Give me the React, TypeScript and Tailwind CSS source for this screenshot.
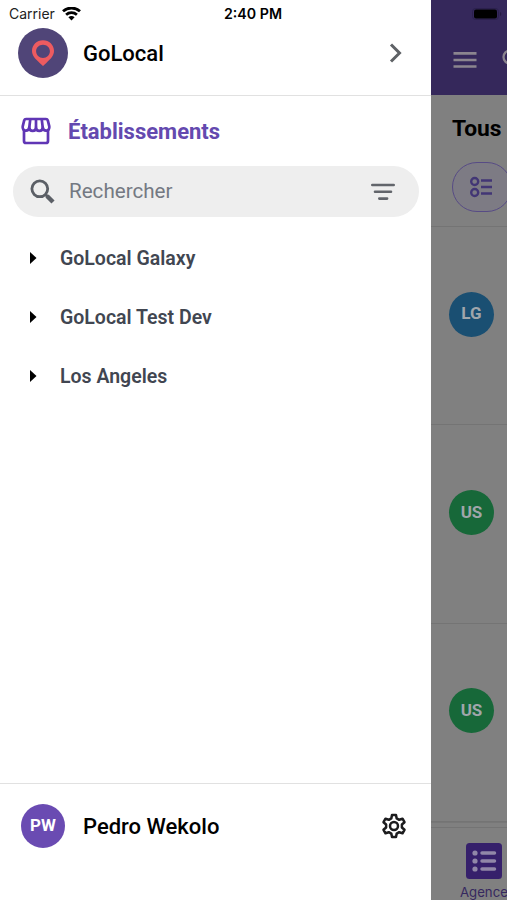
import type { ReactNode } from "react";

const places = ["GoLocal Galaxy", "GoLocal Test Dev", "Los Angeles"];

const agencies = [
  { initials: "LG", color: "bg-[#1a4f72]" },
  { initials: "US", color: "bg-[#176839]" },
  { initials: "US", color: "bg-[#176839]" },
];

function StatusBar() {
  return (
    <div className="flex h-7 shrink-0 items-center pl-[9px] font-['Inter',sans-serif] text-black">
      <div className="flex w-[215px] items-center gap-[6px]">
        <span className="w-[47px] text-[14px] leading-7 text-[#222]">Carrier</span>
        <svg width="19" height="14" viewBox="0 0 19 14" fill="none" stroke="currentColor">
          <path d="M1 4.3C5.8-.1 13.2-.1 18 4.300" strokeWidth="2.800" />
          <path d="M4.100 7.700c3-2.800 7.800-2.800 10.800 0" strokeWidth="2.700" />
          <path d="M9.500 13.400 6.400 10.200c1.700-1.600 4.500-1.600 6.200 0z" fill="currentColor" stroke="none" />
        </svg>
      </div>
      <span className="whitespace-nowrap text-[14.2px] font-semibold leading-7">2:40 PM</span>
    </div>
  );
}

function Avatar({ className, children }: { className: string; children: ReactNode }) {
  return (
    <div
      className={`flex shrink-0 items-center justify-center rounded-full text-[17px] font-bold ${className}`}
    >
      {children}
    </div>
  );
}

function SearchField() {
  return (
    <div className="ml-[13px] mr-3 flex h-[51px] items-center rounded-full bg-[#eeeeee] pl-[17px] pr-6">
      <svg width="25" height="25" viewBox="0 0 25 25" fill="none" stroke="#5b5f66">
        <circle cx="9.800" cy="9.800" r="7.900" strokeWidth="2.800" />
        <path d="m15.500 15.500 2.500 2.500" strokeWidth="3" />
        <path d="m17 17 6 6" strokeWidth="4.400" />
      </svg>
      <span className="mb-[2px] ml-[14px] flex-1 text-[20.600px] leading-6 text-[#747982]">Rechercher</span>
      <svg width="24" height="18" viewBox="0 0 24 18" stroke="#62656b" strokeWidth="2.600" strokeLinecap="round">
        <path d="M1.300 2h21.400M4 8.800h16M8.300 15.600h7.800" />
      </svg>
    </div>
  );
}

function Drawer() {
  return (
    <aside className="flex w-[431px] shrink-0 flex-col bg-white">
      <header className="flex h-24 shrink-0 flex-col border-b border-[#e1e1e1]">
        <StatusBar />
        <div className="flex h-[50px] items-center pl-[18px] pr-[29px]">
          <Avatar className="size-[50px] bg-[#504578]">
            <svg width="24" height="28" viewBox="0 0 24 28">
              <path
                d="M12 1.300C5.800 1.300 1 6 1 11.800c0 4.800 2.900 7.700 7.700 12.200l3.300 3 3.300-3c4.800-4.500 7.700-7.400 7.700-12.200C23 6 18.200 1.300 12 1.300Zm0 4.500c3.900 0 6.900 2.900 6.900 6.500S15.900 19 12 19s-6.900-3.100-6.900-6.700 3-6.500 6.900-6.500Z"
                fill="#ed5b60"
                fillRule="evenodd"
              />
            </svg>
          </Avatar>
          <span className="ml-[15px] flex-1 text-[22px] font-medium text-black">GoLocal</span>
          <svg width="13" height="20" viewBox="0 0 13 20" fill="none" stroke="#5f6266" strokeWidth="3">
            <path d="m2 1.500 8.500 8.500L2 18.500" />
          </svg>
        </div>
      </header>

      <div className="flex h-[70px] shrink-0 items-center pl-[21px] text-[#6449af]">
        <svg
          width="30"
          height="28"
          viewBox="0 0 30 28"
          fill="none"
          stroke="#6036b5"
          strokeWidth="2.700"
          strokeLinejoin="round"
        >
          <path d="M3 13v11a2 2 0 0 0 2 2h20a2 2 0 0 0 2-2V13" />
          <path d="M5 2h20c1 0 1.500.4 1.800 1.400l1.500 5.900c.8 5.300-5.700 6-6.600 1-.3 4.800-6.400 4.800-6.700 0-.3 4.800-6.400 4.800-6.700 0-.9 5-7.400 4.300-6.600-1l1.500-5.900C3.500 2.400 4 2 5 2Z" />
          <path d="m9.300 2-1 8.300M15 2v8.300M20.700 2l1 8.300" />
        </svg>
        <h1 className="ml-[17px] text-[22px] font-bold">Établissements</h1>
      </div>
      <SearchField />

      <ul className="mt-[12px]">
        {places.map((place) => (
          <li key={place} className="flex h-[58.700px] items-center pl-[30px] text-[#414651]">
            <svg width="7" height="12" viewBox="0 0 7 12">
              <path d="m0 0 6.500 6L0 12Z" fill="#000" />
            </svg>
            <span className="ml-[23px] pt-px text-[19.500px] font-semibold">{place}</span>
          </li>
        ))}
      </ul>

      <footer className="mt-auto flex h-[117px] items-start border-t border-[#e1e1e1] pl-[21px] pr-6 pt-5">
        <Avatar className="size-11 bg-[#6a4bb2] text-white">PW</Avatar>
        <span className="ml-[18px] flex-1 text-[22px] font-medium leading-[45px] text-black">Pedro Wekolo</span>
        <svg
          className="mt-[9px]"
          width="26"
          height="26"
          viewBox="0 0 26 26"
          fill="none"
          stroke="#1c1c1e"
          strokeWidth="2.500"
          strokeLinejoin="round"
        >
          <path d="M11 2h4l.7 3.400 2.500 1.400 3.300-1.100 2 3.500-2.600 2.300v3l2.600 2.300-2 3.500-3.300-1.100-2.500 1.400L15 24h-4l-.7-3.400-2.500-1.400-3.300 1.100-2-3.500 2.600-2.300v-3L2.500 9.200l2-3.500 3.300 1.100 2.500-1.400Z" />
          <circle cx="13" cy="13" r="4" />
        </svg>
      </footer>
    </aside>
  );
}

function AgencyScreen() {
  return (
    <main className="flex min-w-0 flex-1 flex-col overflow-hidden bg-[#808080]">
      <header className="h-[95px] shrink-0 bg-[#35285b]">
        <div className="flex h-[27px] items-center pl-[41px]">
          <svg width="30" height="12" viewBox="0 0 30 12">
            <rect x=".5" y=".5" width="26" height="11" rx="3" fill="none" stroke="#2b204d" />
            <rect x="2" y="1.500" width="23" height="9" rx="2" fill="#000" />
            <path d="M28 4v4c1.800-.7 1.800-3.300 0-4Z" fill="#251b43" />
          </svg>
        </div>
        <div className="flex h-[66px] items-center pl-[22px]">
          <svg className="shrink-0" width="24" height="18" viewBox="0 0 24 18" stroke="#8b858f" strokeWidth="2.700">
            <path d="M.5 2.300h23M.5 9h23M.5 15.500h23" />
          </svg>
          <svg
            className="mb-[5px] ml-[25px] shrink-0"
            width="20"
            height="20"
            viewBox="0 0 20 20"
            fill="none"
            stroke="#8b858f"
            strokeWidth="2.300"
          >
            <circle cx="8" cy="9" r="6.500" />
            <path d="m13 14 5 5" />
          </svg>
        </div>
      </header>

      <div className="h-[132px] shrink-0 border-b border-[#747474] pl-[21px] pt-[17px]">
        <h2 className="h-[50px] text-[22.800px] font-bold leading-[34px] text-black">Tous</h2>
        <div className="flex h-[50px] w-[60px] items-center rounded-full border border-[#574b85] bg-[#7d7b84] pl-4">
          <svg width="24" height="22" viewBox="0 0 24 22" fill="none" stroke="#423675" strokeWidth="2.400">
            <circle cx="5.700" cy="5.500" r="3.500" />
            <circle cx="5.700" cy="16.500" r="3.500" />
            <path d="M12 4.500h11M12 11h11M12 17.500h11" />
          </svg>
        </div>
      </div>

      {agencies.map(({ initials, color }, i) => (
        <div
          key={i}
          className="flex h-[198.300px] shrink-0 items-start border-b border-[#747474] pl-[18px] pt-[64.500px]"
        >
          <Avatar className={`size-[45px] text-[#a0a6ab] ${color}`}>{initials}</Avatar>
        </div>
      ))}

      <nav className="mt-auto h-[79px] shrink-0 border-t border-[#777777]">
        <div className="h-[5px] border-b border-[#747474]" />
        <div className="ml-[29px] flex w-[47px] flex-col pt-[15px]">
          <svg className="ml-[6px]" width="36" height="36" viewBox="0 0 36 36">
            <rect width="36" height="36" rx="3.500" fill="#36206b" />
            <g fill="#9187a8">
              <circle cx="9" cy="10" r="2.600" />
              <circle cx="9" cy="18" r="2.600" />
              <circle cx="9" cy="26" r="2.600" />
            </g>
            <path d="M16 10h12.500M16 18h12.500M16 26h12.500" stroke="#9187a8" strokeWidth="3.500" strokeLinecap="round" />
          </svg>
          <span className="mt-[4px] whitespace-nowrap font-['Inter',sans-serif] text-[13.200px] leading-[18px] text-[#36285f]">
            Agence
          </span>
        </div>
      </nav>
    </main>
  );
}

export default function App() {
  return (
    <div className="flex h-screen w-full overflow-hidden font-['Roboto',sans-serif]">
      <Drawer />
      <AgencyScreen />
    </div>
  );
}
